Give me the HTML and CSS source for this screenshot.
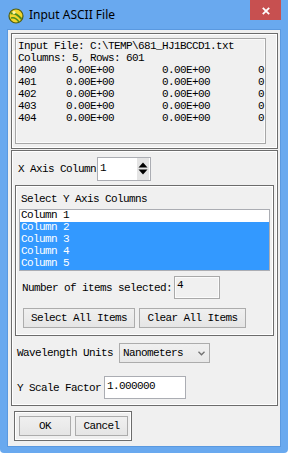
FILE: index.html
```html
<!DOCTYPE html>
<html lang="en">
<head>
    <meta charset="UTF-8">
    <title>Input ASCII File</title>
    <link rel="stylesheet" href="styles.css">
</head>
<body>

<div class="window">
    <div class="titlebar">
        <svg class="app-icon" width="16" height="16" viewBox="0 0 16 16">
            <circle cx="8" cy="8" r="7" fill="#f3d52c" stroke="#4f5d14" stroke-width="1.2"/>
            <path d="M2.5 5.5 C6 4.5 10 7 13.5 11" fill="none" stroke="#4c8a1c" stroke-width="2"/>
            <path d="M3 10 C6 9 9 11 11 14" fill="none" stroke="#4c8a1c" stroke-width="1.4"/>
            <circle cx="6" cy="4.5" r="1.6" fill="#fff6a8"/>
        </svg>
        <span class="title">Input ASCII File</span>
        <div class="close-btn">
            <svg width="8" height="8" viewBox="0 0 8 8">
                <path d="M0.8 0.8L7.2 7.2M7.2 0.8L0.8 7.2" stroke="#fff" stroke-width="1.8"/>
            </svg>
        </div>
    </div>

    <div class="client">
        <!-- file preview -->
        <div class="panel panel-info">
            <div class="file-preview">
<pre>Input File: C:\TEMP\681_HJ1BCCD1.txt
Columns: 5, Rows: 601
400     0.00E+00        0.00E+00        0.00E+00
401     0.00E+00        0.00E+00        0.00E+00
402     0.00E+00        0.00E+00        0.00E+00
403     0.00E+00        0.00E+00        0.00E+00
404     0.00E+00        0.00E+00        0.00E+00</pre>
            </div>
        </div>

        <!-- options -->
        <div class="panel panel-options">
            <div class="x-row">
                <span class="label">X Axis Column</span>
                <div class="spinbox">
                    <span class="spin-value">1</span>
                    <div class="spin-arrows">
                        <svg width="12" height="20" viewBox="0 0 12 20">
                            <polygon points="1.5,8.5 10.5,8.5 6,3.5" fill="#000"/>
                            <polygon points="1.5,10.5 10.5,10.5 6,15.5" fill="#000"/>
                        </svg>
                    </div>
                </div>
            </div>

            <div class="group">
                <div class="group-title">Select Y Axis Columns</div>
                <ul class="listbox">
                    <li>Column 1</li>
                    <li class="selected">Column 2</li>
                    <li class="selected">Column 3</li>
                    <li class="selected">Column 4</li>
                    <li class="selected">Column 5</li>
                </ul>
                <div class="count-row">
                    <span class="label">Number of items selected:</span>
                    <div class="count-box">4</div>
                </div>
                <div class="button-row">
                    <button class="btn btn-select">Select All Items</button>
                    <button class="btn btn-clear">Clear All Items</button>
                </div>
            </div>

            <div class="units-row">
                <span class="label">Wavelength Units</span>
                <div class="dropdown">
                    <span>Nanometers</span>
                    <svg class="chevron" width="7" height="5" viewBox="0 0 7 5">
                        <path d="M0.5 0.8L3.5 3.8L6.5 0.8" fill="none" stroke="#707070" stroke-width="1.3"/>
                    </svg>
                </div>
            </div>

            <div class="scale-row">
                <span class="label">Y Scale Factor</span>
                <div class="text-input">1.000000</div>
            </div>
        </div>

        <!-- dialog buttons -->
        <div class="panel panel-actions">
            <button class="btn btn-ok">OK</button>
            <button class="btn btn-cancel">Cancel</button>
        </div>
    </div>
</div>

</body>
</html>
```

FILE: styles.css
```css
* {
    box-sizing: border-box;
}

body {
    margin: 0;
    background: #fff;
    font-family: "Liberation Mono", monospace;
    font-size: 11px;
    line-height: 12px;
    letter-spacing: -0.6px;
    color: #000;
}

.window {
    width: 288px;
    height: 453px;
    background: #69a9ef;
    padding: 0 8px;
    border-radius: 0 0 4px 4px;
}

.titlebar {
    height: 30px;
    display: flex;
    align-items: flex-start;
}

.app-icon {
    margin-top: 8px;
}

.title {
    font-family: "Noto Sans", sans-serif;
    font-size: 12px;
    line-height: 16px;
    letter-spacing: 0;
    margin: 7px 0 0 5px;
}

.close-btn {
    margin-left: auto;
    margin-right: -1px;
    width: 31px;
    height: 20px;
    background: #c75050;
    display: flex;
    align-items: center;
    justify-content: center;
    padding: 2px 0 0 0;
}

.client {
    width: 272px;
    height: 416px;
    background: #f0f0f0;
    padding: 3px 0 0 3px;
    box-shadow: 0 0 0 1px #5a99e0;
}

.panel {
    border: 1px solid #6c6c6c;
    box-shadow: inset 0 0 0 1px #fff;
}

/* file preview */
.panel-info {
    width: 267px;
    height: 116px;
    padding: 4px 0 0 3px;
}

.file-preview {
    width: 251px;
    height: 106px;
    border: 1px solid #a7a7a7;
    box-shadow: inset 0 0 0 1px #fbfbfb;
    padding: 1px 0 0 2px;
    overflow: hidden;
}

.file-preview pre {
    margin: 0;
    font: inherit;
    white-space: pre;
}

/* options */
.panel-options {
    width: 267px;
    height: 256px;
    margin-top: 1px;
    padding-top: 6px;
}

.x-row {
    display: flex;
    align-items: center;
    margin-left: 6px;
    height: 24px;
}

.spinbox {
    width: 54px;
    height: 24px;
    margin-left: 1px;
    background: #fff;
    border: 1px solid #abadb3;
    display: flex;
    align-items: flex-start;
}

.spin-value {
    padding: 4px 0 0 2px;
}

.spin-arrows {
    margin: 0 1px 0 auto;
    width: 12px;
    height: 22px;
    background: #e4e4e4;
    padding-top: 1px;
}

.spin-arrows svg {
    display: block;
}

.group {
    width: 259px;
    height: 151px;
    margin: 4px 0 0 3px;
    border: 1px solid #6c6c6c;
    box-shadow: inset 0 0 0 1px #fff;
    padding-top: 7px;
}

.group-title {
    margin-left: 5px;
}

.listbox {
    list-style: none;
    margin: 4px 0 0 3px;
    padding: 0;
    width: 251px;
    height: 62px;
    border: 1px solid #abadb3;
    background: #fff;
}

.listbox li {
    height: 12px;
    line-height: 11px;
    padding-left: 1px;
}

.listbox li.selected {
    background: #3399ff;
    color: #fff;
}

.count-row {
    display: flex;
    align-items: center;
    margin: 5px 0 0 6px;
}

.count-box {
    width: 46px;
    height: 23px;
    margin-left: 2px;
    border: 1px solid #a9a9a9;
    box-shadow: inset 0 0 0 1px #fbfbfb;
    background: #f0f0f0;
    padding: 2px 0 0 2px;
}

.button-row {
    display: flex;
    gap: 4px;
    margin: 9px 0 0 7px;
}

.btn {
    height: 20px;
    padding: 0;
    border: 1px solid #acacac;
    background: linear-gradient(#f0f0f0, #e5e5e5);
    font: inherit;
    letter-spacing: inherit;
    color: #000;
}

.btn-select {
    width: 112px;
}

.btn-clear {
    width: 107px;
}

.units-row {
    display: flex;
    align-items: center;
    margin: 7px 0 0 5px;
}

.dropdown {
    width: 91px;
    height: 20px;
    margin-left: 6px;
    border: 1px solid #acacac;
    background: linear-gradient(#f0f0f0, #e8e8e8);
    display: flex;
    align-items: center;
    padding-left: 3px;
}

.chevron {
    margin-left: auto;
    margin-right: 4px;
}

.scale-row {
    display: flex;
    align-items: center;
    margin: 13px 0 0 5px;
}

.text-input {
    width: 82px;
    height: 23px;
    margin-left: 3px;
    border: 1px solid #abadb3;
    background: #fff;
    padding: 3px 0 0 2px;
}

/* dialog buttons */
.panel-actions {
    width: 118px;
    height: 30px;
    margin: 5px 0 0 3px;
    padding: 4px 0 0 4px;
    display: flex;
    gap: 4px;
}

.btn-ok {
    width: 52px;
}

.btn-cancel {
    width: 53px;
}
```
